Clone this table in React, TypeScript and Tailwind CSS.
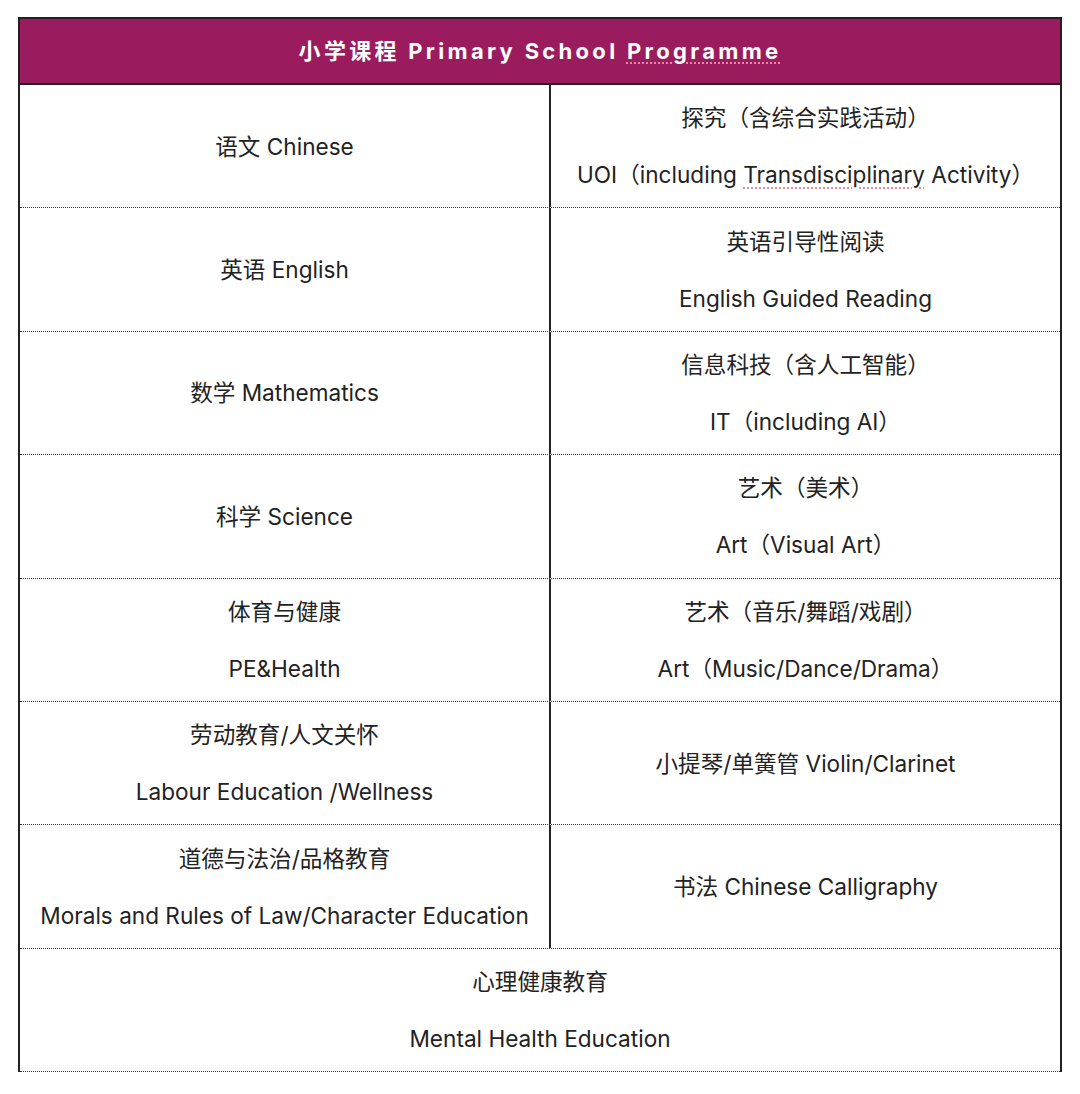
const rows: { left: string[]; right: string[] }[] = [
  { left: ["语文 Chinese"], right: ["探究（含综合实践活动）", "UOI（including |Transdisciplinary| Activity）"] },
  { left: ["英语 English"], right: ["英语引导性阅读", "English Guided Reading"] },
  { left: ["数学 Mathematics"], right: ["信息科技（含人工智能）", "IT（including AI）"] },
  { left: ["科学 Science"], right: ["艺术（美术）", "Art（Visual Art）"] },
  { left: ["体育与健康", "PE&Health"], right: ["艺术（音乐/舞蹈/戏剧）", "Art（Music/Dance/Drama）"] },
  { left: ["劳动教育/人文关怀", "Labour Education /Wellness"], right: ["小提琴/单簧管 Violin/Clarinet"] },
  { left: ["道德与法治/品格教育", "Morals and Rules of Law/Character Education"], right: ["书法 Chinese Calligraphy"] },
]

// "|word|" marks a spell-check squiggle in the original
function Line({ text }: { text: string }) {
  const parts = text.split("|")
  return (
    <p className="leading-[57px]">
      {parts.map((p, i) =>
        i % 2 === 1 ? (
          <span key={i} className="underline decoration-dotted decoration-[#e58a9a] decoration-2 underline-offset-4">
            {p}
          </span>
        ) : (
          <span key={i}>{p}</span>
        ),
      )}
    </p>
  )
}

function Cell({ lines, className = "" }: { lines: string[]; className?: string }) {
  return (
    <div className={`flex flex-col items-center justify-center text-center ${className}`}>
      {lines.map((l, i) => (
        <Line key={i} text={l} />
      ))}
    </div>
  )
}

export default function App() {
  return (
    <div
      className="w-[1080px] h-[1094px] bg-white pt-[17px] pl-[18px] text-[#222] text-[22.6px]"
      style={{ fontFamily: 'Inter, "Noto Sans CJK SC", sans-serif' }}
    >
      <div className="w-[1044px]">
        <div className="h-[68px] bg-[#9b1c5e] border-2 border-[#2a1a22] flex items-center justify-center">
          <h1 className="text-white font-bold text-[22px] tracking-[3.3px]">
            小学课程 Primary School{" "}
            <span className="underline decoration-dotted decoration-[#e58a9a] decoration-2 underline-offset-4">
              Programme
            </span>
          </h1>
        </div>
        <div className="border-x-2 border-[#222]">
          {rows.map((r, i) => (
            <div key={i} className="grid grid-cols-[531px_1fr] h-[123.4px] border-b border-dotted border-[#333]">
              <Cell lines={r.left} className="border-r-2 border-[#222]" />
              <Cell lines={r.right} />
            </div>
          ))}
          <div className="h-[123.4px] border-b border-dotted border-[#333]">
            <Cell lines={["心理健康教育", "Mental Health Education"]} className="h-full" />
          </div>
        </div>
      </div>
    </div>
  )
}
